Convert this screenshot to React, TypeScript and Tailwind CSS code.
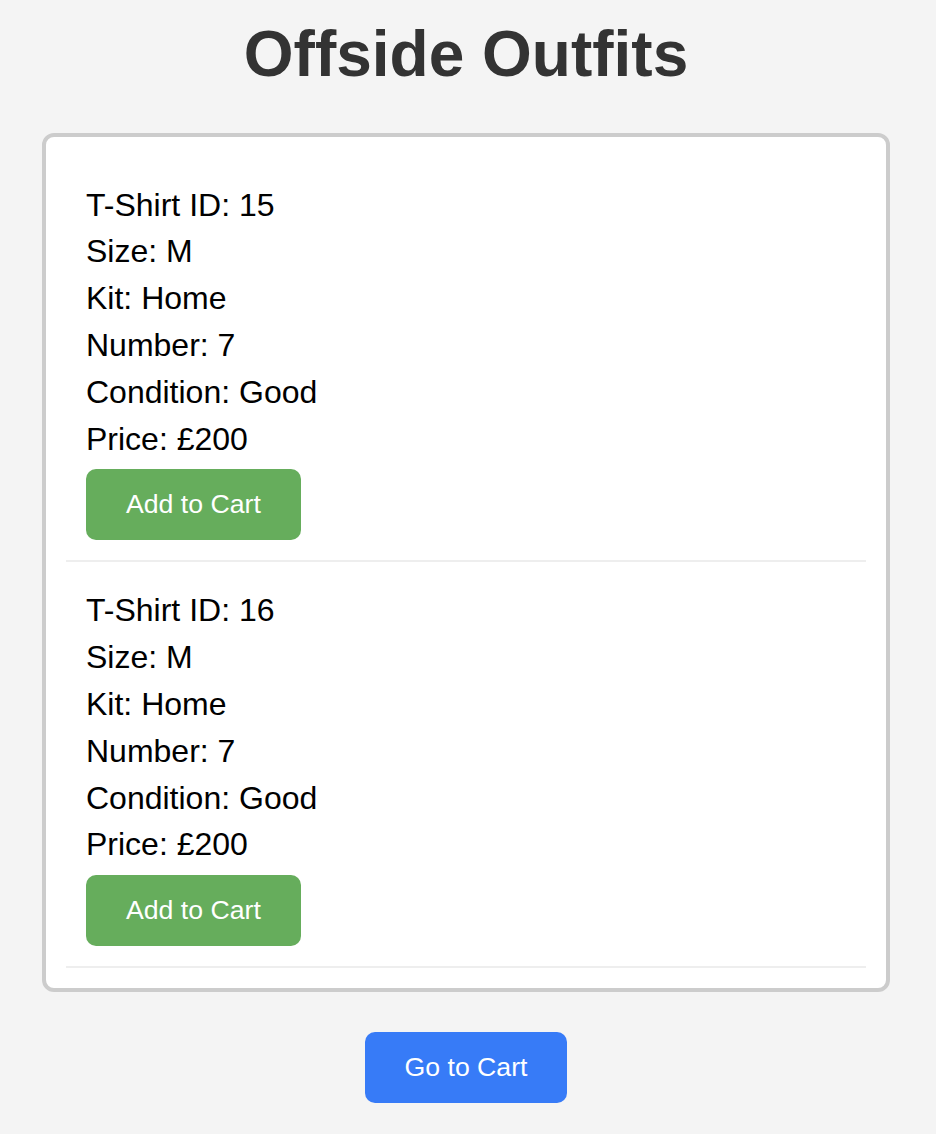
import React from "react";

const items = [
  { id: 15, size: "M", kit: "Home", number: 7, condition: "Good", price: "£200" },
  { id: 16, size: "M", kit: "Home", number: 7, condition: "Good", price: "£200" },
];

export default function App() {
  return (
    <div
      className="min-h-[1134px] w-[936px] bg-[#f4f4f4] pt-[18px]"
      style={{ fontFamily: '"Liberation Sans", Arial, Helvetica, sans-serif' }}
    >
      <div className="w-[932px]">
        <h1 className="m-0 text-center text-[64px] font-bold leading-[73.6px] text-[#333333]">
          Offside Outfits
        </h1>
        <div className="mx-[42px] mt-[41px] rounded-[12px] border-[4px] border-[#cccccc] bg-white p-[20px]">
          {items.map((it) => (
            <div key={it.id} className="border-b-[2px] border-[#eeeeee] p-[20px] text-[32px] leading-[36.8px] text-black">
              <p className="my-[10px]">T-Shirt ID: {it.id}</p>
              <p className="my-[10px]">Size: {it.size}</p>
              <p className="my-[10px]">Kit: {it.kit}</p>
              <p className="my-[10px]">Number: {it.number}</p>
              <p className="my-[10px]">Condition: {it.condition}</p>
              <p className="my-[10px]">Price: {it.price}</p>
              <button className="mt-[12px] block rounded-[10px] bg-[#66ad5c] px-[40px] py-[20px] text-[26.67px] leading-[31px] text-white">
                Add to Cart
              </button>
            </div>
          ))}
        </div>
        <div className="mt-[40px] flex justify-center">
          <button className="rounded-[10px] bg-[#377bf7] px-[40px] py-[20px] text-[26.67px] leading-[31px] text-white">
            Go to Cart
          </button>
        </div>
      </div>
    </div>
  );
}
